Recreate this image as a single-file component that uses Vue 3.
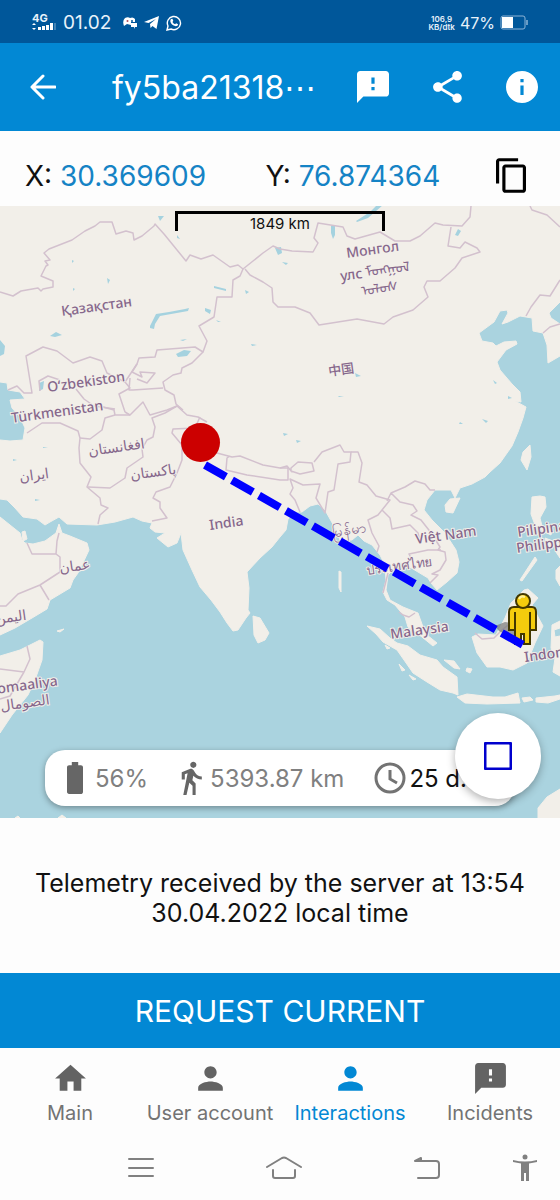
<template>
  <div class="screen">
    <div class="status-bar">
      <div class="signal">
        <span>4G</span>
        <svg viewBox="0 0 24 8" width="24" height="8" fill="#fff">
          <path d="M0 2l2-2 2 2zM0 5h4L2 7z" />
          <rect x="6" y="4" width="3" height="3" />
          <rect x="10" y="3" width="3" height="4" />
          <rect x="14" y="2" width="3" height="5" />
          <rect x="18" y="0" width="3" height="7" />
          <rect x="22" y="0" width="2" height="7" opacity=".25" />
        </svg>
      </div>
      <span class="clock">01.02</span>
      <svg class="gap-icon" viewBox="0 0 14 12" width="14" height="12">
        <path fill="#fff" d="M2 1Q5-.5 7 1q3-1.500 5 1v3H8v3L4 7 1 9Q-1 4 2 1zM8 6h6v4h-2l-1 2V10H8z" />
        <circle cx="4.500" cy="4" r="1" fill="#b04a5a" />
        <circle cx="9" cy="4" r="1" fill="#00579a" />
      </svg>
      <svg viewBox="0 0 15 13" width="15" height="13" fill="#fff">
        <path d="M0 6L15 0l-2.500 13-4-3-2 2-.5-4 6-5-7.500 4z" />
      </svg>
      <svg viewBox="0 0 16 16" width="16" height="16" fill="none" stroke="#fff">
        <path stroke-width="1.400" d="M1 15l1-4a6.600 6.600 0 1 1 3 3z" />
        <path fill="#fff" stroke="none" d="M5 4l1.400-.2.9 2-.8 1.100q1 1.700 2.600 2.400l1-1 2 1q-.1 2-2.300 2Q5 10.400 4.300 6.300 4.300 5 5 4z" />
      </svg>
      <div class="status-right">
        <div class="speed"><span>106,9</span><span>KB/dtk</span></div>
        <span class="percent">47%</span>
        <svg viewBox="0 0 28 15" width="28" height="15">
          <rect x="1" y="1" width="24" height="13" rx="2" fill="none" stroke="#8db4d6" />
          <rect x="2" y="2" width="11" height="11" fill="#fff" />
          <path d="M27 5v5" stroke="#8db4d6" stroke-width="1.500" />
        </svg>
      </div>
    </div>

    <header class="app-bar">
      <button class="icon-btn" aria-label="Back">
        <svg viewBox="0 0 26 26" width="26" height="26" fill="none" stroke="#fff" stroke-width="3" stroke-linecap="round" stroke-linejoin="round">
          <path d="M25 13H2M13 2L2 13l11 11" />
        </svg>
      </button>
      <h1>fy5ba21318<span>⋯</span></h1>
      <button class="icon-btn" aria-label="Report">
        <svg viewBox="2 2 20 20" width="32" height="32" fill="#fff"><path :d="feedbackIcon" /></svg>
      </button>
      <button class="icon-btn" aria-label="Share">
        <svg viewBox="3 2 18 20" width="29" height="32" fill="#fff"><path :d="shareIcon" /></svg>
      </button>
      <button class="icon-btn" aria-label="Info">
        <svg viewBox="2 2 20 20" width="32" height="32" fill="#fff"><path :d="infoIcon" /></svg>
      </button>
    </header>

    <div class="coords">
      <div class="coord">X: <b>30.369609</b></div>
      <div class="coord">Y: <b>76.874364</b></div>
      <button class="icon-btn" aria-label="Copy coordinates">
        <svg viewBox="2 1 19 22" width="30" height="35"><path :d="copyIcon" /></svg>
      </button>
    </div>

    <div class="map">
      <svg class="map-canvas" viewBox="0 206 560 612">
        <rect y="206" width="560" height="612" fill="#aad3df" />
        <path v-for="(d, i) in land" :key="'l' + i" :d="d" class="land" />
        <path v-for="(d, i) in lakes" :key="'w' + i" :d="d" class="lake" />
        <path v-for="(d, i) in borders" :key="'b' + i" :d="d" class="border" />
        <text
          v-for="label in labels"
          :key="label.text"
          class="label"
          :font-size="label.size || 14"
          :transform="`translate(${label.x} ${label.y}) rotate(-8)`"
        >{{ label.text }}</text>

        <path d="M495 626l10-4 8 1 7 8v12l-21-12z" fill="#777" opacity=".7" />
        <g fill="#f4cc0d" stroke="#433800" stroke-width="2">
          <path d="M514 607h18q4 0 4 5v18h-6v14h-6v-10h-3v10h-6v-14h-6v-18q0-5 5-5z" />
          <path d="M515 612v19M530 612v19" />
          <circle cx="523" cy="601" r="7" />
        </g>
        <path d="M519 599q2-4 6-2" fill="none" stroke="#fff09a" stroke-width="2" />
        <path d="M205 465L523 645" class="route" />
        <circle cx="200.500" cy="442.500" r="19.500" fill="#c00" />
      </svg>

      <div class="scale">1849 km</div>

      <div class="stats">
        <svg viewBox="7 2 10 20" width="16" height="32"><path d="M15.700 4H14V2h-4v2H8.300C7.600 4 7 4.600 7 5.300v15.300c0 .8.600 1.400 1.300 1.400h7.300c.8 0 1.400-.6 1.400-1.300V5.300c0-.7-.6-1.300-1.300-1.300z" /></svg>
        <span class="stat">56%</span>
        <svg class="walk" viewBox="5 1 14 22" width="22" height="34"><path :d="walkIcon" /></svg>
        <span class="stat">5393.87 km</span>
        <svg class="time" viewBox="0 0 32 32" width="32" height="32"><path d="M16 2a14 14 0 1 0 0 28a14 14 0 0 0 0-28M16 8v9l7 4" /></svg>
        <span class="duration">25 d...</span>
      </div>

      <button class="fab" aria-label="Stop">
        <svg viewBox="0 0 28 28" width="28" height="28"><rect x="1" y="1" width="26" height="26" rx="2" fill="none" stroke="#0000cd" stroke-width="3" /></svg>
      </button>
    </div>

    <p class="telemetry">Telemetry received by the server at 13:54<br />30.04.2022 local time</p>

    <button class="request">REQUEST CURRENT</button>

    <nav class="tabs">
      <a v-for="tab in tabs" :key="tab.name" href="#" :class="{ active: tab.active }">
        <svg viewBox="0 0 24 24" width="37" height="37"><path :d="tab.icon" /></svg>
        <span>{{ tab.name }}</span>
      </a>
    </nav>

    <div class="system-nav">
      <button aria-label="Recents">
        <svg viewBox="0 0 28 28" width="28" height="28"><path d="M2 5h24M2 14h24M2 22h24" /></svg>
      </button>
      <button aria-label="Home">
        <svg viewBox="0 0 38 28" width="38" height="28"><path d="M2 13L17 4q2-1 4 0l15 9M8 16v6q0 2 2 2h18q2 0 2-2v-6" /></svg>
      </button>
      <button aria-label="Back">
        <svg viewBox="0 0 28 28" width="28" height="28"><path d="M5 24h18q3 0 3-3V10q0-3-3-3H2l6-3v3" /></svg>
      </button>
      <button aria-label="Accessibility">
        <svg class="person" viewBox="0 0 26 28" width="26" height="28"><circle cx="13" cy="3" r="2.500" /><path d="M1 6q12 3 24 0v2l-8 1.500V27h-3v-8h-2v8H9V9.500L1 8z" /></svg>
      </button>
    </div>
  </div>
</template>

<script setup>
// icons
const feedbackIcon = 'M20 2H4c-1.100 0-2 .9-2 2v18l4-4h14c1.100 0 2-.9 2-2V4c0-1.100-.9-2-2-2zm-7 12h-2v-2h2v2zm0-4h-2V6h2v4z'
const shareIcon = 'M18 16.080c-.76 0-1.440.3-1.960.77L8.910 12.700c.05-.23.090-.46.090-.7s-.04-.47-.09-.7l7.050-4.110c.54.5 1.250.81 2.040.81 1.660 0 3-1.340 3-3s-1.340-3-3-3-3 1.340-3 3c0 .24.040.47.090.7L8.040 9.810C7.500 9.310 6.790 9 6 9c-1.660 0-3 1.340-3 3s1.340 3 3 3c.79 0 1.500-.31 2.040-.81l7.120 4.160c-.05.21-.08.43-.08.65 0 1.610 1.310 2.920 2.920 2.920s2.920-1.310 2.920-2.920-1.310-2.920-2.920-2.920z'
const infoIcon = 'M12 2C6.480 2 2 6.480 2 12s4.480 10 10 10 10-4.480 10-10S17.520 2 12 2zm1 15h-2v-6h2v6zm0-8h-2V7h2v2z'
const copyIcon = 'M16 1H4c-1.100 0-2 .9-2 2v14h2V3h12V1zm3 4H8c-1.100 0-2 .9-2 2v14c0 1.100.9 2 2 2h11c1.100 0 2-.9 2-2V7c0-1.100-.9-2-2-2zm0 16H8V7h11v14z'
const walkIcon = 'M13.500 5.500c1.100 0 2-.9 2-2s-.9-2-2-2-2 .9-2 2 .9 2 2 2zM9.800 8.900L7 23h2.100l1.800-8 2.100 2v6h2v-7.500l-2.100-2 .6-3C14.800 12 16.800 13 19 13v-2c-1.900 0-3.500-1-4.300-2.400l-1-1.600c-.4-.6-1-1-1.700-1-.3 0-.5.1-.8.1L6 8.300V13h2V9.600l1.800-.7'
const userIcon = 'M12 12c2.210 0 4-1.790 4-4s-1.790-4-4-4-4 1.790-4 4 1.790 4 4 4zm0 2c-2.670 0-8 1.340-8 4v2h16v-2c0-2.660-5.330-4-8-4z'
const homeIcon = 'M10 20v-6h4v6h5v-8h3L12 3 2 12h3v8z'

const tabs = [
  { name: 'Main', icon: homeIcon },
  { name: 'User account', icon: userIcon },
  { name: 'Interactions', icon: userIcon, active: true },
  { name: 'Incidents', icon: feedbackIcon }
]

// map geometry
const land = [
  // mainland
  'M0 206H560V302L549 313 551 318 560 324V356L548 363 547 345 543 333 533 331 532 318 520 316 508 322 502 324 508 313 507 310 500 311 494 322 479 333 482 341 493 343 496 346 504 342 516 341 517 344 506 350 497 362 500 370 512 384 520 392 521 402 515 401 526 407 523 418 518 432 512 446 500 463 490 472 485 477 472 484 460 488 455 498 451 490 435 490 427 500 424 510 432 520 445 533 456 550 459 562 457 573 447 582 437 590 431 583 428 578 418 572 408 566 400 562 393 570 388 575 386 590 390 600 403 607 418 613 423 627 427 635 437 643 433 646 422 637 408 627 405 617 395 605 387 600 383 592 386 580 385 565 380 555 372 545 364 541 358 535 352 540 340 540 335 528 325 510 318 504 310 506 302 512 296 512 288 519 286 530 280 537 272 547 260 558 247 572 249 588 248 610 250 613 246 618 238 630 233 631 227 623 220 612 211 600 200 587 192 570 183 550 181 533 177 543 168 547 157 538 165 533 155 532 150 528 152 523 142 521 133 517 115 522 97 525 67 524 59 517 50 522 45 525 37 519 23 517 15 508 7 500 0 499V440L10 441 23 440 25 428 20 417 12 408 10 400 25 399 20 392 8 390 7 383 0 382Z',
  // Arabia
  'M0 517L20 533 22 540 25 543 33 544 45 541 56 533 59 524 62 533 70 536 87 543 89 550 82 565 78 573 73 580 70 588 50 600 47 609 32 618 15 628 0 635Z',
  'M22 532l3-1 2 8-4 2z',
  // Horn of Africa
  'M0 656L20 650 40 640 43 642 42 660 35 680 28 695 12 715 0 733Z',
  'M57 631l7-2-4 3z',
  // Sri Lanka, Hainan, Taiwan
  'M253 616L260 618 269 633 265 640 258 643 254 635Z',
  'M460 498L453 513 446 512 445 505 450 499Z',
  'M530 445L523 452 521 460 527 470 531 457Z',
  // Philippines
  'M532 497L540 496 545 497 546 507 540 518 542 526 552 529 551 535 541 530 535 525 531 514Z',
  'M535 557L520 580 522 581 537 560Z',
  'M545 538l8 3-4 7zM557 542l3 2v14l-4-6zM556 570l4-4v20l-4-7z',
  // Sumatra, Malay islands, Java
  'M367 626L380 629 390 638 397 643 408 646 420 655 437 660 443 667 457 677 458 695 453 693 440 690 427 682 413 673 404 660 397 650 383 642 376 634Z',
  'M457 697L467 694 493 697 505 697 518 693 520 703 487 704 465 703Z',
  'M522 698l8-1 3 3-9 2zM536 698l19-2 5-1v4l-12 4-12-1z',
  'M444 660l10 1 6 8-6-1zM467 668l5 1-2 4-4-2z',
  'M385 645l5 3-3 1zM399 664l6 6-3 1zM409 675l7 4-3 1z',
  // Borneo, Sulawesi
  'M472 637L478 634 496 635 505 618 511 603 524 590 528 589 538 598 532 605 537 615 543 626 535 643 527 663 513 670 500 667 487 667 477 653Z',
  'M552 625L560 621V628L554 630 555 637 560 636V676L553 672 555 658 551 648Z',
  // Australia
  'M560 789L547 797 538 808V818H560Z',
  'M58 818l4-3 4 3zM15 818l3-2 2 2z',
  'M339 571l2 1v20l-2-4z'
]

const lakes = [
  'M150 326l6-12 13-2 16-3 4-1-1 3-28 5-5 8-1 5-4-1z',
  'M176 354l8-4 7 1-4 5-9 1z',
  'M0 340l5 6-1 8-4 2zM39 383l5-2-1 8-4 2z',
  'M50 336l6-4 6 3-7 2zM107 278l3 2-2 4zM214 286l12 3v2l-12-3z',
  'M205 308l6 2-1 4-5-3zM158 216l6 0-4 5zM177 235l3 4-3-1zM245 290l4 2-3 2z',
  'M356 221l14-9 7-7h6l-15 13-11 4z',
  'M331 226h4v9l-2 4-2-6zM275 248l6-1 1 6-4 2zM282 262l6 1-2 2z',
  'M455 235l3-6 3 2-3 5zM355 373l6 3-5 1zM338 396l6 0-5 1z',
  'M482 419l6 2-2 2zM283 433l5 1-4 2zM296 440l5 1-4 2zM251 344l6 1-5 1z',
  'M493 380l4 3-2 1zM508 396l4 2-4 1zM460 422l3 2h-4zM216 320l5 2-3 0zM180 340l7-1-4 2z',
  'M13 459l4 1-4 1zM43 447l5 1h-5zM35 499l5 1-5 1zM72 260l2 1-2 2zM73 288l2 1-2 2z'
]

const borders = [
  // Kazakhstan
  'M0 292L13 296 21 291 38 288 41 291 43 289 53 287 53 281 41 276 46 266 48 265 45 261 50 260 44 253 49 249 72 240 85 231 95 226 100 222 112 222 116 234 126 231 133 233 134 240 142 236 154 226 155 224 164 234 186 261 190 255 201 259 213 255 230 267 238 265 243 269 240 276 233 280 232 297 217 297 214 317 199 326 207 341 203 352 195 347 157 350 155 357 139 358 137 364 125 382 107 373 102 361 90 357 73 363 57 351 43 347 26 356 32 393 24 393 17 386 8 390',
  'M40 391L39 381 48 376 60 380M76 389L84 399 94 406 115 409',
  // Central Asia
  'M137 364L132 372 142 377 140 372 155 373 147 383 137 379M125 382L130 388 119 394 125 412M125 412L130 415 143 402 150 415 167 410 177 406',
  'M130 378L129 390 133 390 163 388M203 352L192 363 182 368 181 373 173 375 163 382 165 390 174 395 176 404 183 410',
  // Mongolia
  'M243 269L263 253 273 246 280 249 292 251 313 252 318 243 314 238 318 223 343 227 347 236 355 239 380 232 395 241 410 241 420 236 435 223 443 225 462 226 470 217 471 206',
  'M245 269L250 275 263 282 272 288 273 302 278 307 295 307 310 313 319 325 357 319 384 324 393 317 413 310 428 297 424 287 427 281 440 281 455 268 462 258 480 252 477 248 465 242 460 248 448 246 451 227',
  // Korea and Russia
  'M526 316L531 307 540 295 550 296 560 280M530 206L532 210 547 215 560 227M543 333L550 327 560 324',
  // Iran, Afghanistan, Pakistan
  'M27 433L42 423 60 423 78 431 80 438 79 448 80 463 91 477 87 487 100 498 101 505 108 508 100 515 98 524',
  'M80 438L90 439 102 430 105 418 115 415 130 415M115 415L114 410 103 407',
  'M88 487L110 488 125 478 127 468 143 457 142 449 147 440 153 437 155 427 152 418 165 413 177 406 187 415 198 417 207 422',
  // India and the Himalaya
  'M200 417L195 428 173 429 172 433 182 445 182 460 177 473 170 487 156 492 153 498 160 502 160 508 167 518 152 521',
  'M207 446L217 453 232 457 240 456 263 465 280 468 288 468 288 480 280 480 247 475 226 470 227 458 230 456',
  'M291 468L298 462 312 463 314 471 300 474 291 471ZM280 468L287 466 292 472',
  // Bhutan, Bangladesh, Myanmar
  'M314 462L322 452 340 445 344 452 351 452 350 462 338 464 334 490 328 492 325 513 316 498 320 484 303 485 290 479 293 488 290 494 295 500 300 512',
  'M351 452L358 452 362 463 359 482 367 485 376 496 390 500 378 515 368 520 372 533 379 546 377 552',
  // Laos, Vietnam, Thailand, Cambodia
  'M387 501L391 493 405 487 415 481 425 484 430 490 435 490M391 493L400 502 413 505 417 511 411 515 421 520 432 534 440 547 438 550 445 552 446 560 440 570 432 574 438 575 430 583',
  'M382 510L390 518 392 529 410 525 418 533 420 541M412 560L409 554 428 550 441 550M388 573L383 593M399 612L403 615 409 617 415 613M475 633L482 639 494 638 503 629 515 620',
  // Gulf
  'M27 543L32 554 56 554 57 541 59 533M56 554L60 557 60 572 40 585 18 594 6 606 0 606M40 585L49 600',
  'M27 646L30 659 24 672 0 669M24 672L10 696 0 699'
]

const labels = [
  { text: 'Қазақстан', x: 62, y: 316 },
  { text: 'Монгол', x: 347, y: 258 },
  { text: 'улс ᠮᠣᠩᠭᠣᠯ', x: 341, y: 281 },
  { text: 'ᠤᠯᠤᠰ', x: 362, y: 296 },
  { text: '中国', x: 329, y: 376, size: 13 },
  { text: 'Oʻzbekiston', x: 48, y: 392 },
  { text: 'Türkmenistan', x: 12, y: 423 },
  { text: 'افغانستان', x: 89, y: 456 },
  { text: 'ایران', x: 20, y: 482 },
  { text: 'پاکستان', x: 131, y: 480 },
  { text: 'India', x: 210, y: 530 },
  { text: 'عمان', x: 60, y: 573 },
  { text: 'اليمن', x: -4, y: 624 },
  { text: 'မြန်မာ', x: 333, y: 537 },
  { text: 'Việt Nam', x: 416, y: 544 },
  { text: 'ประเทศไทย', x: 367, y: 575, size: 13 },
  { text: 'Pilipinas', x: 518, y: 537 },
  { text: 'Philippines', x: 517, y: 553 },
  { text: 'Malaysia', x: 391, y: 639 },
  { text: 'Indonesia', x: 525, y: 662 },
  { text: 'Soomaaliya', x: -18, y: 696 },
  { text: 'الصومال', x: 1, y: 711 }
]
</script>

<style>
body {
  margin: 0;
}
</style>

<style scoped>
.screen {
  display: flex;
  flex-direction: column;
  min-height: 100vh;
  background: #fdfdfd;
  color: #111;
  font-family: Inter, 'Liberation Sans', sans-serif;
}
button {
  border: none;
  background: none;
  padding: 0;
  font: inherit;
  cursor: pointer;
}
svg {
  display: block;
  flex-shrink: 0;
}
.status-bar {
  display: flex;
  align-items: center;
  gap: 7px;
  min-height: 43px;
  padding: 2px 32px 0;
  box-sizing: border-box;
  background: #00579a;
  color: #e8f2fa;
}
.signal span {
  display: block;
  font-size: 11px;
  font-weight: 700;
  line-height: 9px;
}
.clock {
  font-size: 19px;
}
.gap-icon {
  margin-left: 5px;
}
.status-right {
  display: flex;
  align-items: center;
  gap: 5px;
  margin-left: auto;
}
.speed {
  display: flex;
  flex-direction: column;
  align-items: center;
  font-size: 8px;
  font-weight: 600;
  line-height: 8px;
}
.percent {
  font-size: 16px;
}
.app-bar {
  display: flex;
  align-items: center;
  min-height: 88px;
  padding: 0 22px 0 30px;
  background: #0288d4;
  color: #fff;
}
.app-bar h1 {
  flex: 1;
  margin: 0 0 0 56px;
  font-size: 32px;
  font-weight: 400;
  white-space: nowrap;
}
.app-bar .icon-btn + .icon-btn {
  margin-left: 44px;
}
.coords {
  display: flex;
  align-items: center;
  min-height: 75px;
  padding: 14px 34px 0 25px;
  box-sizing: border-box;
}
.coord {
  flex: 0 0 48%;
  font-size: 28px;
}
.coord:nth-child(2) {
  flex: 1;
}
.coord b {
  font-weight: 400;
  color: #1583c5;
}
.map {
  position: relative;
  overflow: hidden;
}
.map-canvas {
  width: 100%;
}
.land {
  fill: #f2efe9;
  stroke: #f2efe9;
  stroke-linejoin: round;
}
.lake {
  fill: #a5d2df;
}
.border {
  fill: none;
  stroke: #d3c1ce;
  stroke-width: 1.5;
  stroke-linejoin: round;
}
.label {
  font-family: 'Noto Sans', 'DejaVu Sans', 'Noto Sans CJK SC', sans-serif;
  font-weight: 500;
  fill: #86678c;
  stroke: #f2efe9;
  stroke-width: 2;
  paint-order: stroke;
}
.route {
  stroke: #00f;
  stroke-width: 8;
  stroke-dasharray: 24 7;
}
.scale {
  position: absolute;
  top: 5px;
  left: 175px;
  width: 210px;
  height: 20px;
  box-sizing: border-box;
  border: 3px solid #000;
  border-bottom: none;
  font-size: 15px;
  line-height: 20px;
  text-align: center;
}
.stats {
  position: absolute;
  left: 45px;
  right: 45px;
  bottom: 12px;
  display: flex;
  align-items: center;
  height: 56px;
  padding: 0 22px;
  box-sizing: border-box;
  border-radius: 20px;
  background: #fff;
  box-shadow: 0 2px 6px rgba(0, 0, 0, 0.35);
  font-size: 24px;
  white-space: nowrap;
  overflow: hidden;
}
.stats svg {
  fill: #666;
}
.stat {
  margin-left: 12px;
  color: #808080;
}
.walk {
  margin-left: 32px;
}
.walk + .stat {
  margin-left: 8px;
}
.stats .time {
  margin-left: 30px;
  fill: none;
  stroke: #737373;
  stroke-width: 3;
}
.duration {
  margin-left: 3px;
}
.fab {
  position: absolute;
  right: 19px;
  bottom: 19px;
  display: flex;
  align-items: center;
  justify-content: center;
  width: 86px;
  height: 86px;
  border-radius: 50%;
  background: #fff;
  box-shadow: 0 3px 8px rgba(0, 0, 0, 0.3);
}
.telemetry {
  flex: 1;
  margin: 0;
  padding: 50px 16px 45px;
  font-size: 25px;
  line-height: 30px;
  text-align: center;
}
.request {
  min-height: 75px;
  background: #0288d4;
  color: #fff;
  font-size: 30px;
}
.tabs {
  display: flex;
  padding: 12px 0 10px;
}
.tabs a {
  flex: 1;
  display: flex;
  flex-direction: column;
  align-items: center;
  gap: 4px;
  color: #737373;
  font-size: 20px;
  line-height: 24px;
  text-decoration: none;
  white-space: nowrap;
}
.tabs svg {
  fill: #636363;
}
.tabs .active {
  color: #0288d4;
}
.tabs .active svg {
  fill: #0288d4;
}
.system-nav {
  display: grid;
  grid-template-columns: 1fr 1fr 1fr 54px;
  justify-items: center;
  padding: 19px 8px 18px 69px;
}
.system-nav svg {
  fill: none;
  stroke: #808080;
  stroke-width: 2;
  stroke-linecap: round;
  stroke-linejoin: round;
}
.system-nav .person {
  fill: #808080;
  stroke: none;
}
</style>
